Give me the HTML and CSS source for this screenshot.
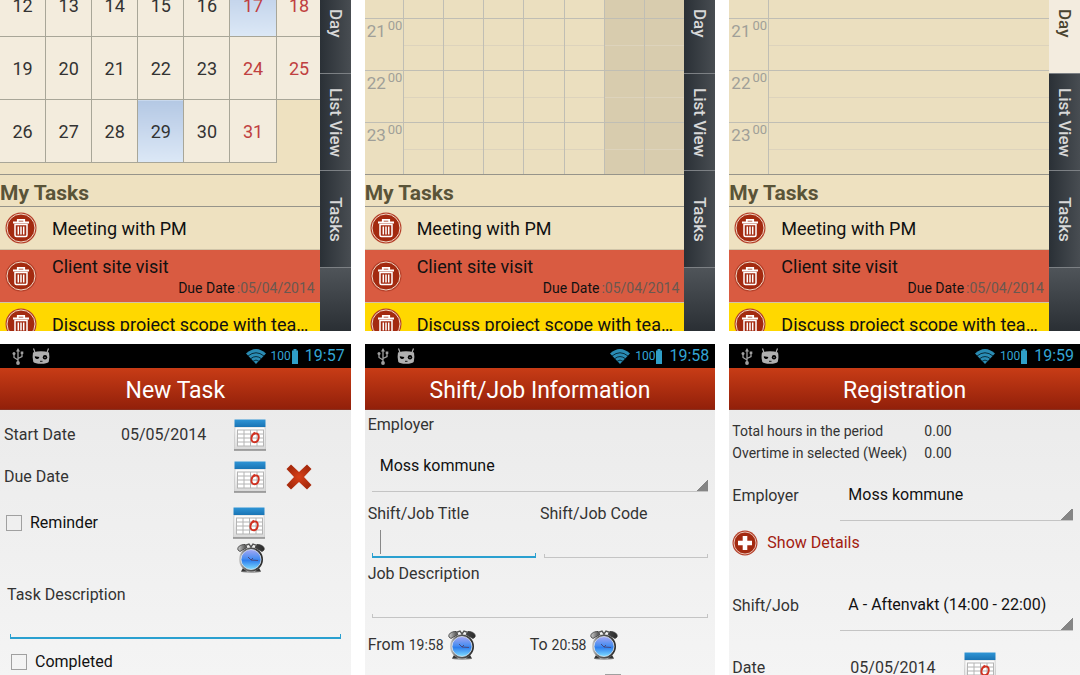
FILE: index.html
```
<!DOCTYPE html>
<html lang="en">
<head>
  <meta charset="UTF-8">
  <meta name="viewport" content="width=device-width, initial-scale=1.0">
  <title>Shift Calendar - Screens</title>
  <link rel="stylesheet" href="styles.css">
</head>
<body>

  <!-- shared icons -->
  <svg class="sprite" aria-hidden="true">
    <defs>
      <linearGradient id="blue-top" x1="0" y1="0" x2="0" y2="1">
        <stop offset="0" stop-color="#2f95d6"/>
        <stop offset="1" stop-color="#1a74b4"/>
      </linearGradient>
      <linearGradient id="paper" x1="0" y1="0" x2="0" y2="1">
        <stop offset="0" stop-color="#ffffff"/>
        <stop offset="1" stop-color="#d8d8d8"/>
      </linearGradient>
      <linearGradient id="clock-face" x1="0" y1="0" x2="0" y2="1">
        <stop offset="0" stop-color="#a6a8f4"/>
        <stop offset="0.45" stop-color="#4a8df0"/>
        <stop offset="0.55" stop-color="#2f7fee"/>
        <stop offset="1" stop-color="#7fdcff"/>
      </linearGradient>
      <linearGradient id="steel" x1="0" y1="0" x2="1" y2="0">
        <stop offset="0" stop-color="#d0d0d0"/>
        <stop offset="0.25" stop-color="#666"/>
        <stop offset="1" stop-color="#2a2a2a"/>
      </linearGradient>
      <radialGradient id="cross">
        <stop offset="0" stop-color="#d84018"/>
        <stop offset="1" stop-color="#a82a0c"/>
      </radialGradient>
    </defs>
    <symbol id="trash" viewBox="0 0 32 32">
      <circle cx="16" cy="16" r="15.5" fill="#b5402a"/>
      <circle cx="16" cy="16" r="14" fill="#a32a10" stroke="#f0d8c8" stroke-width="1"/>
      <path d="M8 10.500h16M12.800 10V7.800h6.400V10" fill="none" stroke="#fff" stroke-width="1.800"/>
      <path d="M10 12.500h12v10.500a1.500 1.500 0 0 1-1.500 1.500h-9a1.500 1.500 0 0 1-1.500-1.500zM13.300 14.500v8M16 14.500v8M18.700 14.500v8" fill="none" stroke="#fff" stroke-width="1.500"/>
    </symbol>
    <symbol id="plus" viewBox="0 0 26 26">
      <circle cx="13" cy="13" r="12.500" fill="#b5402a"/>
      <circle cx="13" cy="13" r="11" fill="#a32a10" stroke="#e8c0b4" stroke-width="1"/>
      <path d="M13 6v14M6 13h14" stroke="#fff" stroke-width="4.600"/>
    </symbol>
    <symbol id="calendar" viewBox="0 0 32 32">
      <path d="M1 8h30l1 22.500H0z" fill="url(#paper)" stroke="#b8b8b8" stroke-width=".6"/>
      <path d="M0 31h32" stroke="#8c8c8c" stroke-width="1.500"/>
      <path d="M.5 .5h31v7.500H.5z" fill="url(#blue-top)"/>
      <path d="M3 11h27v16H3z" fill="#fff"/>
      <path d="M3 11h27M3 15h27M3 19h27M3 23h27M3 27h27M3.500 11v16M10 11v16M16.500 11v16M23 11v16M29.500 11v16" stroke="#b4b4b4" stroke-width="1"/>
      <path d="M19.500 13.500l1.500 1c2.800-.6 4 1.500 3.700 4.200-.3 2.800-1.800 4.600-4 4.600-2.300 0-3.600-1.800-3.200-4.600.3-2.200 1.700-3.900 3.500-4.200" fill="none" stroke="#d03020" stroke-width="1.900"/>
    </symbol>
    <symbol id="alarm" viewBox="0 0 28 30">
      <ellipse cx="14" cy="28.500" rx="10" ry="1.500" fill="#777" opacity=".6"/>
      <path d="M6 25l-2 3.500h6zM22 25l2 3.500h-6z" fill="#333"/>
      <path d="M1 7C0 4 3 1.500 8 1.500l2 3-7 4zM27 7c1-3-2-5.500-7-5.500l-2 3 7 4z" fill="url(#steel)" stroke="#333" stroke-width=".8"/>
      <path d="M8 2.500l4-1.500 2 3 2-3 4 1.500M14 4v3" fill="none" stroke="#555" stroke-width="1.400"/>
      <circle cx="14" cy="16.500" r="12" fill="url(#steel)"/>
      <circle cx="14" cy="16.500" r="10" fill="url(#clock-face)" stroke="#dde8f4" stroke-width=".8"/>
      <path d="M11 14l3 3 7 .5M14 17l2-2" fill="none" stroke="#4a4a80" stroke-width="1"/>
    </symbol>
    <symbol id="delete" viewBox="0 0 26 26">
      <path d="M5 .5l8 7.500 8-7.500 4.500 4.500-7.500 8 7.500 8-4.500 4.500-8-7.500-8 7.500L.5 21 8 13 .5 5z" fill="url(#cross)"/>
    </symbol>
    <symbol id="usb" viewBox="0 0 12 17">
      <path d="M6 15V2M6 12L2 9.500V6M6 10.500l4-2V5.500" fill="none" stroke="#a0a0a0" stroke-width="1.300"/>
      <path d="M6 0l2 3.500H4zM8.700 3.500h2.600v2.600H8.700z" fill="#a0a0a0"/>
      <circle cx="2" cy="5.500" r="1.500" fill="#a0a0a0"/>
      <circle cx="6" cy="15" r="1.900" fill="#a0a0a0"/>
    </symbol>
    <symbol id="robot" viewBox="0 0 18 17">
      <path d="M1.500 .5l1.500 4M16.500 .5l-1.500 4" stroke="#b0b0b0" stroke-width="1.200"/>
      <path d="M1 4.500Q9 2 17 4.500q1 5-.3 9.500Q15 15.800 9 15.800t-7.700-1.800Q0 9.500 1 4.500z" fill="#b0b0b0"/>
      <path d="M2.800 8.200l4.600.9a2.100 2.100 0 1 1-4.600-.9z"/>
      <circle cx="13" cy="9.300" r="2.200"/>
      <circle cx="13" cy="9.300" r=".6" fill="#b0b0b0"/>
      <path d="M8 13.300h2.500" stroke="#000" stroke-width=".9"/>
    </symbol>
    <symbol id="wifi" viewBox="0 0 20 15">
      <path d="M0 4.500Q10-4.500 20 4.500L10 15z" fill="#2a8cb4"/>
      <path d="M2 7q8-6.500 16 0M4.500 9.800q5.500-4.500 11 0M7 12.300q3-2.500 6 0" fill="none" stroke="#04202c" stroke-width=".9"/>
    </symbol>
    <symbol id="battery" viewBox="0 0 6 15">
      <path d="M1.500 0h3v1.500H6V15H0V1.500h1.500z" fill="#2f9fc8"/>
    </symbol>
  </svg>

  <main class="gallery">

    <!-- month view -->
    <section class="phone">
      <div class="planner">
        <div class="planner-main">
          <div class="period">
            <table class="month">
              <tr><td>12</td><td>13</td><td>14</td><td>15</td><td>16</td><td class="weekend marked">17</td><td class="weekend">18</td></tr>
              <tr><td>19</td><td>20</td><td>21</td><td>22</td><td>23</td><td class="weekend">24</td><td class="weekend">25</td></tr>
              <tr><td>26</td><td>27</td><td>28</td><td class="today">29</td><td>30</td><td class="weekend">31</td><td class="empty"></td></tr>
            </table>
          </div>
          <h2>My Tasks</h2>
          <ul class="tasks">
            <li>
              <button class="icon-button" aria-label="Delete task"><svg class="round-icon"><use href="#trash"/></svg></button>
              <span class="task-name">Meeting with PM</span>
            </li>
            <li class="overdue">
              <button class="icon-button" aria-label="Delete task"><svg class="round-icon"><use href="#trash"/></svg></button>
              <span class="task-name">Client site visit</span>
              <span class="due"><b>Due Date</b>:05/04/2014</span>
            </li>
            <li class="pending">
              <button class="icon-button" aria-label="Delete task"><svg class="round-icon"><use href="#trash"/></svg></button>
              <span class="task-name">Discuss project scope with team members</span>
            </li>
          </ul>
        </div>
        <nav class="tabs">
          <a href="#">Day</a>
          <a href="#">List View</a>
          <a href="#">Tasks</a>
        </nav>
      </div>
    </section>

    <!-- week view -->
    <section class="phone">
      <div class="planner">
        <div class="planner-main">
          <div class="period">
            <table class="hours">
              <tr><th></th><td></td><td></td><td></td><td></td><td></td><td class="off"></td><td class="off"></td></tr>
              <tr><th>21<sup>00</sup></th><td></td><td></td><td></td><td></td><td></td><td class="off"></td><td class="off"></td></tr>
              <tr><th>22<sup>00</sup></th><td></td><td></td><td></td><td></td><td></td><td class="off"></td><td class="off"></td></tr>
              <tr><th>23<sup>00</sup></th><td></td><td></td><td></td><td></td><td></td><td class="off"></td><td class="off"></td></tr>
            </table>
          </div>
          <h2>My Tasks</h2>
          <ul class="tasks">
            <li>
              <button class="icon-button" aria-label="Delete task"><svg class="round-icon"><use href="#trash"/></svg></button>
              <span class="task-name">Meeting with PM</span>
            </li>
            <li class="overdue">
              <button class="icon-button" aria-label="Delete task"><svg class="round-icon"><use href="#trash"/></svg></button>
              <span class="task-name">Client site visit</span>
              <span class="due"><b>Due Date</b>:05/04/2014</span>
            </li>
            <li class="pending">
              <button class="icon-button" aria-label="Delete task"><svg class="round-icon"><use href="#trash"/></svg></button>
              <span class="task-name">Discuss project scope with team members</span>
            </li>
          </ul>
        </div>
        <nav class="tabs">
          <a href="#">Day</a>
          <a href="#">List View</a>
          <a href="#">Tasks</a>
        </nav>
      </div>
    </section>

    <!-- day view -->
    <section class="phone">
      <div class="planner">
        <div class="planner-main">
          <div class="period">
            <table class="hours">
              <tr><th></th><td></td></tr>
              <tr><th>21<sup>00</sup></th><td></td></tr>
              <tr><th>22<sup>00</sup></th><td></td></tr>
              <tr><th>23<sup>00</sup></th><td></td></tr>
            </table>
          </div>
          <h2>My Tasks</h2>
          <ul class="tasks">
            <li>
              <button class="icon-button" aria-label="Delete task"><svg class="round-icon"><use href="#trash"/></svg></button>
              <span class="task-name">Meeting with PM</span>
            </li>
            <li class="overdue">
              <button class="icon-button" aria-label="Delete task"><svg class="round-icon"><use href="#trash"/></svg></button>
              <span class="task-name">Client site visit</span>
              <span class="due"><b>Due Date</b>:05/04/2014</span>
            </li>
            <li class="pending">
              <button class="icon-button" aria-label="Delete task"><svg class="round-icon"><use href="#trash"/></svg></button>
              <span class="task-name">Discuss project scope with team members</span>
            </li>
          </ul>
        </div>
        <nav class="tabs">
          <a href="#" class="active">Day</a>
          <a href="#">List View</a>
          <a href="#">Tasks</a>
        </nav>
      </div>
    </section>

    <!-- new task -->
    <section class="phone form-phone">
      <div class="status-bar">
        <svg class="usb"><use href="#usb"/></svg>
        <svg class="robot"><use href="#robot"/></svg>
        <svg class="wifi"><use href="#wifi"/></svg>
        <span class="level">100</span>
        <svg class="battery"><use href="#battery"/></svg>
        <span class="clock">19:57</span>
      </div>
      <h1>New Task</h1>
      <form class="task-form">
        <div class="date-row">
          <span>Start Date</span>
          <span>05/05/2014</span>
          <button type="button" class="icon-button" aria-label="Pick start date"><svg class="picker"><use href="#calendar"/></svg></button>
        </div>
        <div class="date-row">
          <span>Due Date</span>
          <span></span>
          <button type="button" class="icon-button" aria-label="Pick due date"><svg class="picker"><use href="#calendar"/></svg></button>
          <button type="button" class="icon-button clear-date" aria-label="Clear due date"><svg class="delete"><use href="#delete"/></svg></button>
        </div>
        <div class="reminder-row">
          <label class="check"><input type="checkbox"> Reminder</label>
          <div class="reminder-icons">
            <button type="button" class="icon-button" aria-label="Pick reminder date"><svg class="picker"><use href="#calendar"/></svg></button>
            <button type="button" class="icon-button alarm-button" aria-label="Pick reminder time"><svg class="alarm"><use href="#alarm"/></svg></button>
          </div>
        </div>
        <label for="task-description" class="description-label">Task Description</label>
        <input type="text" id="task-description" class="field focused">
        <label class="check completed"><input type="checkbox"> Completed</label>
      </form>
    </section>

    <!-- shift / job information -->
    <section class="phone form-phone">
      <div class="status-bar">
        <svg class="usb"><use href="#usb"/></svg>
        <svg class="robot"><use href="#robot"/></svg>
        <svg class="wifi"><use href="#wifi"/></svg>
        <span class="level">100</span>
        <svg class="battery"><use href="#battery"/></svg>
        <span class="clock">19:58</span>
      </div>
      <h1>Shift/Job Information</h1>
      <form class="job-form">
        <label for="job-employer">Employer</label>
        <select id="job-employer" class="spinner">
          <option>Moss kommune</option>
        </select>
        <div class="pair">
          <div class="title-box">
            <label for="job-title">Shift/Job Title</label>
            <input type="text" id="job-title" class="field focused">
            <span class="cursor"></span>
          </div>
          <div>
            <label for="job-code">Shift/Job Code</label>
            <input type="text" id="job-code" class="field">
          </div>
        </div>
        <label for="job-description">Job Description</label>
        <input type="text" id="job-description" class="field">
        <div class="time-row">
          <div class="time">
            <span>From</span>
            <span class="hour">19:58</span>
            <button type="button" class="icon-button" aria-label="Pick start time"><svg class="alarm"><use href="#alarm"/></svg></button>
          </div>
          <div class="time">
            <span>To</span>
            <span class="hour">20:58</span>
            <button type="button" class="icon-button" aria-label="Pick end time"><svg class="alarm"><use href="#alarm"/></svg></button>
          </div>
        </div>
        <div class="check extra"><input type="checkbox" aria-label="Next day"></div>
      </form>
    </section>

    <!-- registration -->
    <section class="phone form-phone">
      <div class="status-bar">
        <svg class="usb"><use href="#usb"/></svg>
        <svg class="robot"><use href="#robot"/></svg>
        <svg class="wifi"><use href="#wifi"/></svg>
        <span class="level">100</span>
        <svg class="battery"><use href="#battery"/></svg>
        <span class="clock">19:59</span>
      </div>
      <h1>Registration</h1>
      <form class="registration-form">
        <dl class="totals">
          <dt>Total hours in the period</dt><dd>0.00</dd>
          <dt>Overtime in selected (Week)</dt><dd>0.00</dd>
        </dl>
        <div class="select-row">
          <label for="reg-employer">Employer</label>
          <select id="reg-employer" class="spinner">
            <option>Moss kommune</option>
          </select>
        </div>
        <button type="button" class="details"><svg class="plus"><use href="#plus"/></svg>Show Details</button>
        <div class="select-row">
          <label for="reg-shift">Shift/Job</label>
          <select id="reg-shift" class="spinner">
            <option>A - Aftenvakt (14:00 - 22:00)</option>
          </select>
        </div>
        <div class="date-row">
          <span>Date</span>
          <span>05/05/2014</span>
          <button type="button" class="icon-button" aria-label="Pick date"><svg class="picker"><use href="#calendar"/></svg></button>
        </div>
      </form>
    </section>

  </main>

</body>
</html>
```

FILE: styles.css
```
* {
  box-sizing: border-box;
}

body {
  margin: 0;
  background-color: #fff;
  color: #333;
  font-family: Roboto, sans-serif;
  font-size: 16px;
  line-height: 20px;
}

.sprite {
  position: absolute;
  width: 0;
  height: 0;
}

svg {
  display: block;
}

.gallery {
  display: grid;
  grid-template-columns: repeat(3, minmax(0, 1fr));
  grid-template-rows: 331px minmax(0, 1fr);
  gap: 13px 14px;
  height: 100vh;
  overflow: hidden;
}

.phone {
  overflow: hidden;
}

.icon-button {
  display: block;
  padding: 0;
  border: none;
  background: none;
  cursor: pointer;
}

/* calendar screens */

.planner {
  display: flex;
  height: 100%;
}

.planner-main {
  flex: 1;
  min-width: 0;
  overflow: hidden;
  background-color: #eee1c0;
}

.period {
  height: 175px;
  overflow: hidden;
  border-bottom: 1px solid #96948a;
}

.month,
.hours {
  width: 100%;
  border-collapse: collapse;
  table-layout: fixed;
}

.month {
  width: calc(100% + 4px);
  margin: -27px 0 0 -1px;
}

.month td {
  height: 63px;
  padding: 2px 0 0;
  border: 1px solid #a8a698;
  background-color: #f3ecdd;
  text-align: center;
  font-size: 18px;
}

.month .weekend {
  color: #c04040;
}

.month .today,
.month .marked {
  background: linear-gradient(#b4c8e4, #dce8f6);
}

.month .empty {
  border: none;
  background: none;
}

.hours {
  margin-top: -34px;
  background-color: #ebdfbf;
}

.hours tr {
  height: 52px;
  border-bottom: 1px solid #c0beb4;
}

.hours th {
  width: 39px;
  padding: 2px 0 0 2px;
  vertical-align: top;
  text-align: left;
  color: #a09f98;
  font-size: 17px;
  font-weight: normal;
  white-space: nowrap;
}

.hours sup {
  margin-left: 2px;
  font-size: 13px;
  line-height: 0;
}

.hours td {
  padding: 0;
  border-left: 1px solid #c0beb4;
  background: linear-gradient(#ddd3bc, #ddd3bc) 0 26px / 100% 1px no-repeat;
}

.hours .off {
  background-color: #d8ccae;
}

h2 {
  height: 32px;
  margin: 0;
  border-bottom: 1px solid #96948a;
  color: #5a5438;
  font-size: 21px;
  font-weight: bold;
  line-height: 36px;
}

.tasks {
  margin: 0;
  padding: 0;
  list-style: none;
}

.tasks li {
  display: grid;
  grid-template-columns: 32px minmax(0, 1fr);
  column-gap: 15px;
  align-items: center;
  height: 43px;
  padding: 0 5px;
  border-bottom: 1px solid #d0c4a8;
  color: #111;
}

.round-icon {
  width: 32px;
  height: 32px;
}

.task-name {
  overflow: hidden;
  font-size: 18px;
  line-height: 23px;
  text-overflow: ellipsis;
  white-space: nowrap;
}

.tasks .overdue {
  grid-template-rows: 23px 20px;
  align-content: center;
  height: 53px;
  background-color: #d95b41;
}

.overdue .icon-button {
  grid-row: span 2;
}

.tasks .pending {
  background-color: #ffd800;
}

.due {
  color: #6a5850;
  font-size: 14px;
  text-align: right;
}

.due b {
  margin-right: 2px;
  color: #111;
  font-weight: normal;
}

.tabs {
  display: flex;
  flex-direction: column;
  width: 31px;
  background: linear-gradient(#50555a, #2a2f34) bottom / 100% 64px no-repeat #33383c;
}

.tabs a {
  height: 97px;
  padding-top: 14px;
  border-bottom: 1px solid #7c8084;
  background: linear-gradient(to right, #2a3036, #484d52);
  color: #d8d8d8;
  font-size: 17px;
  font-weight: 500;
  line-height: 30px;
  text-decoration: none;
  writing-mode: vertical-rl;
}

.tabs a:first-child {
  height: 74px;
  padding-top: 9px;
}

.tabs a:last-child {
  padding-top: 26px;
}

.tabs .active {
  background: #f3ecdf;
  color: #4a4430;
}

/* form screens */

.form-phone {
  background: linear-gradient(#e9e9e9, #f4f4f4);
}

.status-bar {
  display: flex;
  align-items: center;
  height: 24px;
  padding: 0 6px 0 12px;
  background-color: #000;
  color: #33a5d4;
}

.usb {
  width: 12px;
  height: 17px;
  margin-right: 8px;
}

.robot {
  width: 18px;
  height: 17px;
}

.wifi {
  width: 20px;
  height: 15px;
  margin-left: auto;
}

.level {
  margin-left: 5px;
  font-size: 12px;
}

.battery {
  width: 6px;
  height: 15px;
  margin: 0 7px 0 1px;
}

.clock {
  font-size: 16px;
}

h1 {
  height: 42px;
  margin: 0;
  border-bottom: 1px solid #8a3020;
  background: linear-gradient(#c83c16, #92200a);
  color: #fff;
  font-size: 23px;
  font-weight: normal;
  line-height: 46px;
  text-align: center;
}

.date-row {
  display: grid;
  grid-template-columns: 117px 113px 34px 1fr;
  align-items: center;
  height: 42px;
}

.picker {
  width: 32px;
  height: 32px;
}

.delete {
  width: 26px;
  height: 26px;
}

.clear-date {
  margin-left: 18px;
}

.alarm {
  width: 28px;
  height: 30px;
}

.check {
  display: flex;
  align-items: center;
  gap: 8px;
  color: #111;
}

input[type="checkbox"] {
  width: 16px;
  height: 16px;
  margin: 0;
  border: 1px solid #a0a0a0;
  background: none;
  appearance: none;
}

.field {
  display: block;
  height: 34px;
  padding: 0 8px;
  border: none;
  outline: none;
  background:
    linear-gradient(#c4c4c4, #c4c4c4) bottom / 100% 1px no-repeat,
    linear-gradient(#c4c4c4, #c4c4c4) left bottom / 1px 4px no-repeat,
    linear-gradient(#c4c4c4, #c4c4c4) right bottom / 1px 4px no-repeat;
  font: inherit;
}

.focused {
  background:
    linear-gradient(#2aa0d0, #2aa0d0) bottom / 100% 2px no-repeat,
    linear-gradient(#2aa0d0, #2aa0d0) left bottom / 1px 5px no-repeat,
    linear-gradient(#2aa0d0, #2aa0d0) right bottom / 1px 5px no-repeat;
}

.spinner {
  display: block;
  width: 100%;
  height: 57px;
  padding: 6px 8px 0;
  border: none;
  border-bottom: 1px solid #c4c4c4;
  background: linear-gradient(135deg, transparent 50%, #858585 50%) right bottom / 12px 12px no-repeat;
  color: #111;
  font: inherit;
  appearance: none;
}

.task-form {
  padding: 4px 10px 0 4px;
}

.reminder-row {
  display: flex;
  justify-content: space-between;
  align-items: flex-start;
  height: 87px;
  padding: 9px 76px 0 2px;
}

.reminder-row .check {
  height: 32px;
}

.alarm-button {
  margin: 4px 0 0 4px;
}

.description-label {
  display: block;
  padding-left: 3px;
}

.task-form .field {
  width: calc(100% - 6px);
  margin-left: 6px;
}

.completed {
  margin-top: 13px;
  padding-left: 7px;
}

.job-form {
  padding: 5px 7px 0 3px;
}

.job-form label {
  display: block;
}

.job-form .spinner,
.job-form .field {
  width: calc(100% - 4px);
  margin-left: 4px;
}

.job-form .spinner {
  margin-bottom: 12px;
}

.pair {
  display: grid;
  grid-template-columns: 1fr 1fr;
  column-gap: 4px;
  margin-bottom: 6px;
}

.title-box {
  position: relative;
}

.cursor {
  position: absolute;
  bottom: 4px;
  left: 12px;
  width: 1px;
  height: 24px;
  background-color: #888;
}

.time-row {
  display: grid;
  grid-template-columns: 162px 1fr;
  margin-top: 12px;
}

.time {
  display: flex;
  align-items: center;
  gap: 4px;
}

.hour {
  font-size: 14px;
}

.extra {
  margin: 14px 0 0 237px;
}

.registration-form {
  padding: 10px 7px 0 3px;
}

.totals {
  display: grid;
  grid-template-columns: 192px 1fr;
  margin: 0;
  font-size: 14px;
  line-height: 22px;
}

.totals dd {
  margin: 0;
}

.select-row {
  display: grid;
  grid-template-columns: 108px minmax(0, 1fr);
  align-items: center;
}

.select-row label {
  padding-top: 6px;
}

.details {
  display: flex;
  align-items: center;
  gap: 9px;
  height: 26px;
  margin: 9px 0 18px;
  padding: 0;
  border: none;
  background: none;
  color: #a32010;
  font: inherit;
  cursor: pointer;
}

.plus {
  width: 26px;
  height: 26px;
}

.registration-form .date-row {
  grid-template-columns: 118px 114px 34px 1fr;
  margin-top: 16px;
}
```
